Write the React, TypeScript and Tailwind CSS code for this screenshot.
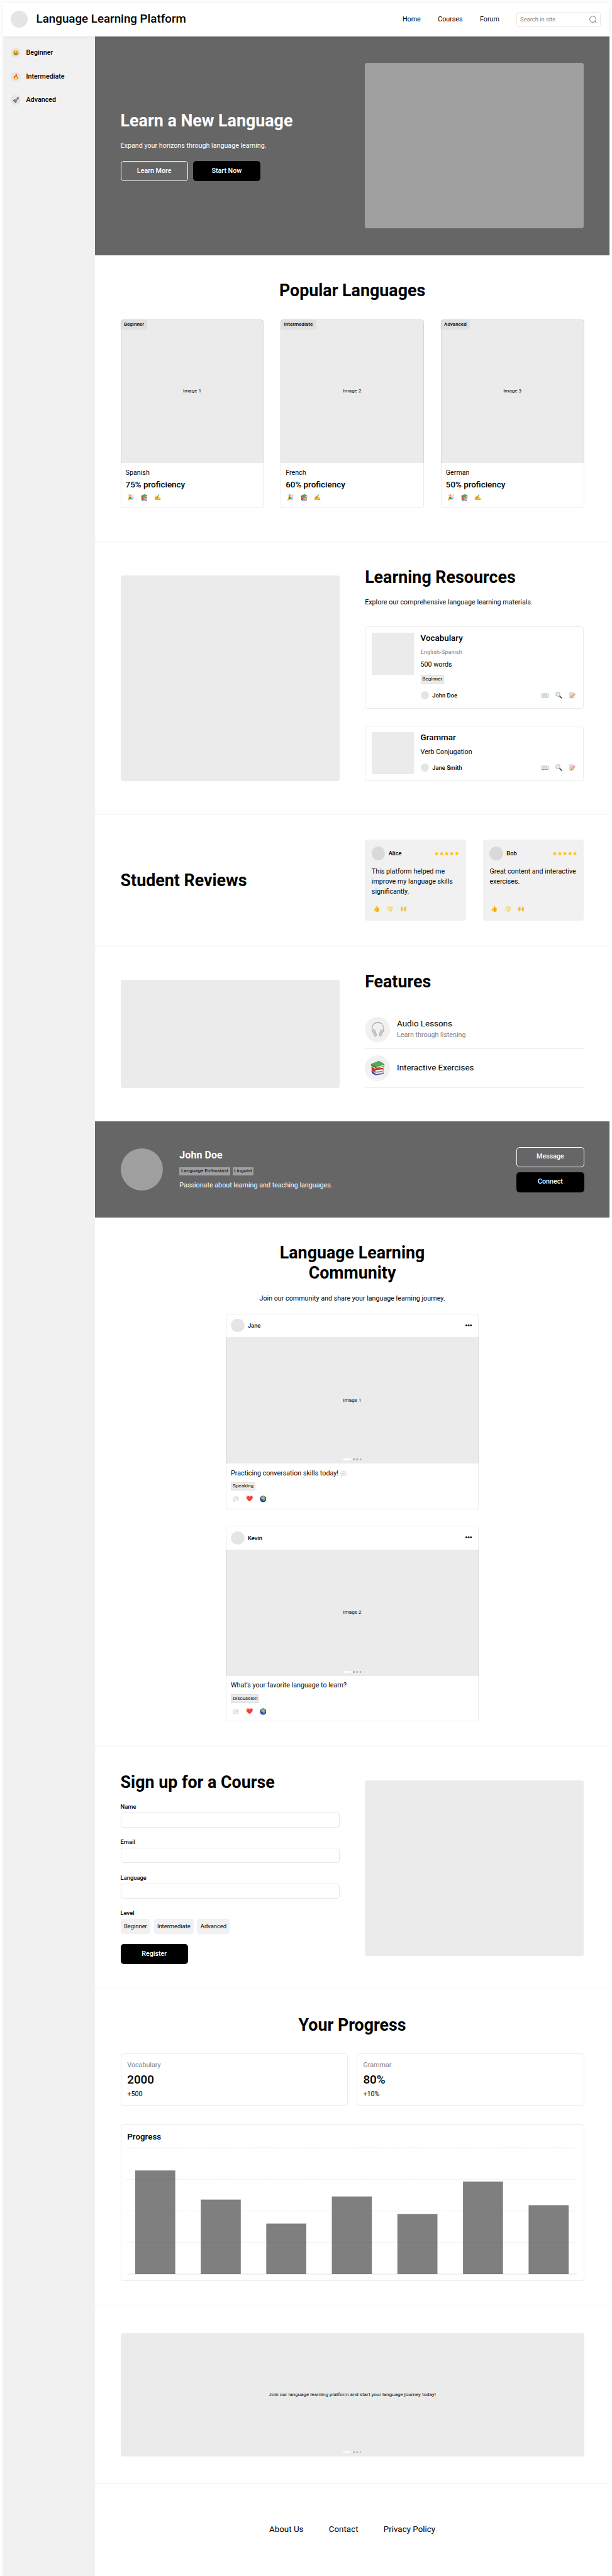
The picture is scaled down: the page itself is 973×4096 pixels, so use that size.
import type { ReactNode } from "react";

const FRAME =
  "after:pointer-events-none after:absolute after:inset-0 after:rounded-[4px] after:border after:border-black/8 after:content-['']";

function Headphones() {
  return (
    <svg viewBox="0 0 32 36" className="h-36 w-32" fill="none">
      <path d="M2.5 24V15C2.5 6 8 1.5 16 1.5S29.500 6 29.500 15V24" stroke="#b5b5b5" strokeWidth="1.8" />
      <path d="M9 3.200Q16 -.2 23 3.200" stroke="#a3a3a3" strokeWidth="2.400" />
      <path d="M1.500 19 4.500 17 12 32 9 35Z" fill="#d2d2d2" stroke="#9a9a9a" strokeWidth=".8" />
      <path d="M30.500 19 27.500 17 20 32 23 35Z" fill="#d2d2d2" stroke="#9a9a9a" strokeWidth=".8" />
      <path d="M6.500 18.500 9.500 18 14 31 12 34Z" fill="#bcbcbc" />
      <path d="M25.500 18.500 22.500 18 18 31 20 34Z" fill="#bcbcbc" />
    </svg>
  );
}

function Books({ className = "size-16" }: { className?: string }) {
  return (
    <svg viewBox="0 0 32 32" className={className}>
      <path d="M2 20 10 27 29 24V29L11 32 3 27Z" fill="#3e4f9b" />
      <path d="M11 27 28 24V27L11 30Z" fill="#e9e9ee" />
      <path d="M2 12 9 17 29 15V23L11 26 3 21Z" fill="#cf2b2b" />
      <path d="M11 20.500 28 18.500V22L11 24.200Z" fill="#f3efec" />
      <path d="M1 7 19 0 31 7V12L14 17 2 11Z" fill="#2f7d34" />
      <path d="M1 7 19 0 31 7 13 13Z" fill="#57a84f" />
      <path d="M13.500 13.500 30 8.500V11L14 15.500Z" fill="#eeeee6" />
    </svg>
  );
}

function Bubble() {
  return (
    <svg viewBox="0 0 32 32" className="inline-block size-16">
      <path
        d="M16 5C24.500 5 31 9 31 15S24.500 25 16 25Q13.500 25 11.500 24.500 8 28 3.500 27.500 6.500 25.500 6.500 22.500C3 20.700 1 18.200 1 15 1 9 7.500 5 16 5Z"
        fill="#f5f5f5"
        stroke="#bdbdbd"
        strokeWidth="1.800"
      />
      <g fill="#8c8c8c">
        <circle cx="10.500" cy="15" r="1.700" />
        <circle cx="16" cy="15" r="1.700" />
        <circle cx="21.500" cy="15" r="1.700" />
      </g>
    </svg>
  );
}

function Globe() {
  return (
    <svg viewBox="0 0 32 32" className="size-16">
      <circle cx="16" cy="16" r="15.500" fill="#2457b8" />
      <path d="M3 23A15 15 0 0 0 29 23Q16 30 3 23Z" fill="#173c8c" />
      <path
        d="M8 6Q15 1 22 4L27 9 24 11 28 15 24 17 22 25 18 27 16 19 9 18 6 13Z"
        fill="#8fae5b"
      />
      <path d="M9 11 19 11 21 16 15 16Z" fill="#dccb86" />
    </svg>
  );
}

function OpenBook() {
  return (
    <svg viewBox="0 0 32 32" className="size-16">
      <path d="M0 8H32V27H0Z" fill="#4d9cc4" />
      <path d="M2 5Q10 3 16 7 22 3 30 5V25Q22 23 16 26 10 23 2 25Z" fill="#eceef0" />
      <path d="M16 7V26" stroke="#7d858c" strokeWidth="1.800" />
      <path
        d="M5 9H13M5 13H13M5 17H13M5 21H13M19 9H27M19 13H27M19 17H27M19 21H27"
        stroke="#a8adb2"
        strokeWidth="1.400"
      />
    </svg>
  );
}

function Magnifier() {
  return (
    <svg viewBox="0 0 32 32" className="size-16" fill="none">
      <path d="M20 20 30 30" stroke="#2b2b2b" strokeWidth="4.600" strokeLinecap="round" />
      <circle cx="12" cy="12" r="10" fill="#e9eff3" stroke="#8d9298" strokeWidth="2.200" />
      <path d="M6 11Q7.500 6.500 12 6" stroke="#fff" strokeWidth="2" />
    </svg>
  );
}

function Memo() {
  return (
    <svg viewBox="0 0 32 32" className="size-16">
      <path d="M2 1H28V31H2Z" fill="#e3e3e3" />
      <path d="M6 6H24M6 11H24M6 16H18M6 21H13" stroke="#b4b4b4" strokeWidth="1.500" />
      <path d="M12 22 25 10 30 15 17 27Z" fill="#f2b632" />
      <path d="M25 10 27 8Q31 8 32 13L30 15Z" fill="#e57373" />
      <path d="M12 22 17 27 9 30Z" fill="#8a6a45" />
    </svg>
  );
}

function GlowStar() {
  return (
    <svg viewBox="0 0 32 32" className="size-16">
      <path
        d="M16 5 19.200 12 27 12.700 21 18 23 26 16 21.800 9 26 11 18 5 12.700 12.800 12Z"
        fill="#fff0a0"
        stroke="#f5b921"
        strokeWidth="2"
        strokeLinejoin="round"
      />
      <path
        d="M8 3 10.500 7M24 3 21.500 7M1 19 5 18M31 19 27 18M16 26V31M2 8 5 10M30 8 27 10"
        stroke="#f0b429"
        strokeWidth="2"
      />
    </svg>
  );
}

type Item = { id: string; icon: ReactNode };

function Emojis({ items }: { items: Item[] }) {
  return (
    <div className="flex gap-8">
      {items.map((e) => (
        <span key={e.id} className="flex size-24 shrink-0 items-center justify-center text-[9px] leading-none">
          {e.icon}
        </span>
      ))}
    </div>
  );
}

const PRAISE: Item[] = [
  { id: "party", icon: "🎉" },
  { id: "books", icon: <Books /> },
  { id: "writing", icon: "✍️" },
];

const STUDY: Item[] = [
  { id: "book", icon: <OpenBook /> },
  { id: "search", icon: <Magnifier /> },
  { id: "memo", icon: <Memo /> },
];

const CHEERS: Item[] = [
  { id: "thumb", icon: "👍" },
  { id: "star", icon: <GlowStar /> },
  { id: "hands", icon: "🙌" },
];

const REACTIONS: Item[] = [
  { id: "bubble", icon: <Bubble /> },
  { id: "heart", icon: "❤️" },
  { id: "globe", icon: <Globe /> },
];

function Heading({ children, className = "" }: { children: ReactNode; className?: string }) {
  return <h2 className={`text-[26.8px] leading-48 font-bold ${className}`}>{children}</h2>;
}

function Tag({ children }: { children: ReactNode }) {
  return (
    <span className="flex h-20 w-fit items-center rounded-[1px] border border-black/5 bg-[#ebebeb] px-3 text-[8.04px] leading-none">
      {children}
    </span>
  );
}

function Button({ children, solid = false }: { children: ReactNode; solid?: boolean }) {
  return (
    <button
      className={`h-48 w-160 rounded-[5px] text-[10.72px] leading-none font-medium text-white ${
        solid ? "bg-black" : "border border-white"
      }`}
    >
      {children}
    </button>
  );
}

function Pager() {
  return (
    <div className="absolute bottom-8 left-1/2 flex -translate-x-1/2 gap-4">
      <span className="h-4 w-20 rounded-[1px] bg-white" />
      <span className="size-4 rounded-full bg-[#a6a6a6]" />
      <span className="size-4 rounded-full bg-[#a6a6a6]" />
      <span className="size-4 rounded-full bg-[#a6a6a6]" />
    </div>
  );
}

function Header() {
  return (
    <header className="relative z-10 flex h-80 items-center bg-white px-20 shadow-[0_0_5px_rgba(0,0,0,0.1)]">
      <span className="size-40 rounded-full bg-[#e5e5e5]" />
      <h1 className="ml-20 text-[18.76px] leading-40 font-medium">Language Learning Platform</h1>
      <nav className="ml-auto flex gap-41 text-[10.72px] leading-24">
        <a>Home</a>
        <a>Courses</a>
        <a>Forum</a>
      </nav>
      <div className="ml-41 flex h-36 w-200 items-center justify-between rounded-[4px] border border-[#e8e8e8] pr-8 pl-7 text-[9.38px] leading-none text-[#808080]">
        <span>Search in site</span>
        <svg viewBox="0 0 18 18" className="size-18" fill="none" stroke="#555" strokeWidth="1.3">
          <circle cx="8.3" cy="8.3" r="7.4" />
          <path d="M13.4 13.6 17 17.4" />
        </svg>
      </div>
    </header>
  );
}

const LEVELS = [
  ["😀", "Beginner"],
  ["🔥", "Intermediate"],
  ["🚀", "Advanced"],
];

function Sidebar() {
  return (
    <aside className="flex w-220 shrink-0 flex-col gap-32 bg-[#f1f1f1] px-20 pt-28">
      {LEVELS.map(([icon, label]) => (
        <a key={label} className="flex h-24 items-center gap-12 text-[10.72px] leading-24 font-medium">
          <span className="flex size-24 items-center justify-center rounded-full bg-[#e5e5e5] text-[8.5px] leading-none">
            {icon}
          </span>
          {label}
        </a>
      ))}
    </aside>
  );
}

function Hero() {
  return (
    <section className="flex h-520 items-center gap-60 bg-[#666] px-60 text-white">
      <div className="w-520">
        <Heading>Learn a New Language</Heading>
        <p className="mt-24 text-[10.72px] leading-24">Expand your horizons through language learning.</p>
        <div className="mt-24 flex gap-12">
          <Button>Learn More</Button>
          <Button solid>Start Now</Button>
        </div>
      </div>
      <div className="h-392 w-520 rounded-[4px] bg-[#9f9f9f]" />
    </section>
  );
}

const LANGUAGES = [
  { level: "Beginner", image: "Image 1", name: "Spanish", score: "75% proficiency" },
  { level: "Intermediate", image: "Image 2", name: "French", score: "60% proficiency" },
  { level: "Advanced", image: "Image 3", name: "German", score: "50% proficiency" },
];

function Popular() {
  return (
    <section className="h-680 border-b border-[#f2f2f2] px-60 pt-60">
      <Heading className="text-center">Popular Languages</Heading>
      <div className="mt-44 flex gap-40">
        {LANGUAGES.map((l) => (
          <article key={l.name} className={`relative h-448 w-340 overflow-hidden rounded-[4px] ${FRAME}`}>
            <div className="relative flex h-340 items-center justify-center bg-[#ebebeb] text-[8.04px] leading-none">
              {l.image}
              <span className="absolute top-0 left-0 flex h-24 items-center rounded-br-[4px] bg-[#dfdfdf] px-8 font-medium">
                {l.level}
              </span>
            </div>
            <div className="px-12 pt-12">
              <p className="text-[10.72px] leading-24">{l.name}</p>
              <p className="my-4 text-[13.4px] leading-28 font-medium">{l.score}</p>
              <Emojis items={PRAISE} />
            </div>
          </article>
        ))}
      </div>
    </section>
  );
}

function Resource({ title, author, children }: { title: string; author: string; children: ReactNode }) {
  return (
    <>
      <div className="size-100 shrink-0 bg-[#ebebeb]" />
      <div className="flex-1">
        <h3 className="text-[13.4px] leading-28 font-medium">{title}</h3>
        {children}
        <div className="flex h-24 items-center justify-between">
          <div className="flex items-center gap-8 text-[9.38px] leading-none font-medium">
            <span className="size-20 rounded-full bg-[#e5e5e5]" />
            {author}
          </div>
          <Emojis items={STUDY} />
        </div>
      </div>
    </>
  );
}

function Resources() {
  return (
    <section className="flex h-648 gap-60 border-b border-[#f2f2f2] px-60 pt-60">
      <div className="mt-20 h-488 w-520 rounded-[4px] bg-[#ebebeb]" />
      <div className="w-520">
        <Heading>Learning Resources</Heading>
        <p className="mt-24 text-[10.72px] leading-24">Explore our comprehensive language learning materials.</p>
        <article className={`relative mt-44 flex h-196 gap-16 p-16 ${FRAME}`}>
          <Resource title="Vocabulary" author="John Doe">
            <p className="mt-8 text-[9.38px] leading-20 text-[#808080]">English-Spanish</p>
            <p className="mt-8 text-[10.72px] leading-24">500 words</p>
            <div className="mt-12 mb-16">
              <Tag>Beginner</Tag>
            </div>
          </Resource>
        </article>
        <article className={`relative mt-40 flex h-132 gap-16 p-16 ${FRAME}`}>
          <Resource title="Grammar" author="Jane Smith">
            <p className="mt-8 mb-12 text-[10.72px] leading-24">Verb Conjugation</p>
          </Resource>
        </article>
      </div>
    </section>
  );
}

const REVIEWS = [
  { name: "Alice", text: "This platform helped me improve my language skills significantly." },
  { name: "Bob", text: "Great content and interactive exercises." },
];

function Reviews() {
  return (
    <section className="flex h-312 items-center gap-60 border-b border-[#f2f2f2] px-60">
      <Heading className="w-520">Student Reviews</Heading>
      <div className="flex gap-40">
        {REVIEWS.map((r) => (
          <article key={r.name} className="flex h-192 w-240 flex-col rounded-[4px] bg-[#f1f1f1] p-16">
            <div className="flex h-32 items-center gap-8 text-[9.38px] leading-none font-medium">
              <span className="size-32 rounded-full bg-[#d9d9d9]" />
              {r.name}
              <svg viewBox="0 0 60 12" className="ml-auto h-12 w-60" fill="#ffc60a">
                {[0, 12, 24, 36, 48].map((x) => (
                  <path
                    key={x}
                    transform={`translate(${x} 0)`}
                    d="M6 .6 7.5 4.2 11.4 4.5 8.4 7 9.4 10.9 6 8.8 2.6 10.9 3.6 7 .6 4.5 4.5 4.2Z"
                  />
                ))}
              </svg>
            </div>
            <p className="mt-16 h-72 text-[10.72px] leading-24">{r.text}</p>
            <div className="mt-16">
              <Emojis items={CHEERS} />
            </div>
          </article>
        ))}
      </div>
    </section>
  );
}

const FEATURES = [
  { icon: <Headphones />, title: "Audio Lessons", note: "Learn through listening" },
  { icon: <Books className="size-34" />, title: "Interactive Exercises", note: "" },
];

function Features() {
  return (
    <section className="flex h-416 gap-60 px-60 pt-60">
      <div className="mt-20 h-256 w-520 rounded-[4px] bg-[#ebebeb]" />
      <div className="w-520">
        <Heading className="mb-44">Features</Heading>
        {FEATURES.map((f) => (
          <div key={f.title} className="flex h-92 items-center gap-16 border-b border-[#ececec]">
            <span className="flex size-60 items-center justify-center rounded-full bg-[#f1f1f1]">{f.icon}</span>
            <div>
              <p className="text-[13.4px] leading-28">{f.title}</p>
              {f.note && <p className="text-[10.72px] leading-24 text-[#808080]">{f.note}</p>}
            </div>
          </div>
        ))}
      </div>
    </section>
  );
}

function Profile() {
  return (
    <section className="flex h-228 items-center gap-40 bg-[#666] px-60 text-white">
      <span className="size-100 rounded-full bg-[#9f9f9f]" />
      <div className="flex-1">
        <h2 className="text-[16.08px] leading-32 font-bold">John Doe</h2>
        <div className="my-12 flex gap-6 text-[8.04px] leading-none text-black">
          <span className="flex h-20 items-center rounded-[1px] bg-[#9f9f9f] px-4">Language Enthusiast</span>
          <span className="flex h-20 items-center rounded-[1px] bg-[#9f9f9f] px-4">Linguist</span>
        </div>
        <p className="text-[10.72px] leading-24">Passionate about learning and teaching languages.</p>
      </div>
      <div className="flex flex-col gap-12">
        <Button>Message</Button>
        <Button solid>Connect</Button>
      </div>
    </section>
  );
}

const POSTS = [
  {
    name: "Jane",
    image: "Image 1",
    text: (
      <>
        Practicing conversation skills today! <Bubble />
      </>
    ),
    tag: "Speaking",
  },
  { name: "Kevin", image: "Image 2", text: "What's your favorite language to learn?", tag: "Discussion" },
];

function Community() {
  return (
    <section className="flex h-1256 flex-col items-center border-b border-[#f2f2f2] pt-60">
      <Heading className="w-520 text-center">
        Language Learning
        <br />
        Community
      </Heading>
      <p className="my-24 text-[10.72px] leading-24">Join our community and share your language learning journey.</p>
      <div className="flex flex-col gap-40">
        {POSTS.map((p) => (
          <article key={p.name} className={`relative h-464 w-600 overflow-hidden rounded-[4px] ${FRAME}`}>
            <div className="flex h-56 items-center gap-8 px-12 text-[9.38px] leading-none font-medium">
              <span className="size-32 rounded-full bg-[#e5e5e5]" />
              {p.name}
              <svg viewBox="0 0 24 24" className="ml-auto size-24" fill="#000">
                <circle cx="6.6" cy="11" r="2" />
                <circle cx="12" cy="11" r="2" />
                <circle cx="17.4" cy="11" r="2" />
              </svg>
            </div>
            <div className="relative flex h-300 items-center justify-center bg-[#ebebeb] text-[8.04px] leading-none">
              {p.image}
              <Pager />
            </div>
            <div className="px-12 pt-11">
              <p className="h-24 text-[10.72px] leading-24">{p.text}</p>
              <div className="mt-9 mb-8">
                <Tag>{p.tag}</Tag>
              </div>
              <Emojis items={REACTIONS} />
            </div>
          </article>
        ))}
      </div>
    </section>
  );
}

function SignUp() {
  return (
    <section className="flex h-576 gap-60 border-b border-[#f2f2f2] px-60 pt-60">
      <div className="w-520">
        <Heading>Sign up for a Course</Heading>
        {["Name", "Email", "Language"].map((f) => (
          <label key={f} className="mt-24 block text-[9.38px] leading-20 font-medium">
            {f}
            <span className="mt-4 block h-36 w-520 rounded-[4px] border border-[#e8e8e8]" />
          </label>
        ))}
        <p className="mt-24 text-[9.38px] leading-20 font-medium">Level</p>
        <div className="mt-4 mb-24 flex gap-8">
          {["Beginner", "Intermediate", "Advanced"].map((c) => (
            <span key={c} className="flex h-36 items-center rounded-[4px] bg-[#f1f1f1] px-8 text-[9.38px] leading-none">
              {c}
            </span>
          ))}
        </div>
        <Button solid>Register</Button>
      </div>
      <div className="mt-20 h-416 w-520 rounded-[4px] bg-[#ebebeb]" />
    </section>
  );
}

const STATS = [
  ["Vocabulary", "2000", "+500"],
  ["Grammar", "80%", "+10%"],
];

const BARS = [
  [19.4, 246],
  [174.9, 176.8],
  [330.4, 120],
  [486, 184.2],
  [641.6, 142.8],
  [797.2, 219.8],
  [952.9, 163.6],
];

function Progress() {
  return (
    <section className="h-752 border-b border-[#f2f2f2] px-60 pt-60">
      <Heading className="text-center">Your Progress</Heading>
      <div className="mt-44 flex gap-20">
        {STATS.map(([label, value, delta]) => (
          <div key={label} className={`relative h-124 w-540 p-16 ${FRAME}`}>
            <p className="text-[10.72px] leading-24 text-[#808080]">{label}</p>
            <p className="my-4 text-[18.76px] leading-36 font-medium">{value}</p>
            <p className="text-[10.72px] leading-24">{delta}</p>
          </div>
        ))}
      </div>
      <div className={`relative mt-44 h-372 p-16 ${FRAME}`}>
        <h3 className="mb-12 text-[13.4px] leading-28 font-medium">Progress</h3>
        <svg viewBox="0 0 1068 300" className="h-300 w-1068 overflow-visible">
          <g stroke="#ededed" strokeWidth="2" strokeDasharray="3 3">
            <path d="M0 0H1068M0 75H1068M0 150H1068M0 225H1068" />
          </g>
          <path d="M0 300H1068" stroke="#ededed" strokeWidth="2" />
          {BARS.map(([x, h]) => (
            <rect key={x} x={x} y={300 - h} width="95" height={h} fill="#000" fillOpacity="0.5" />
          ))}
        </svg>
      </div>
    </section>
  );
}

function Banner() {
  return (
    <section className="h-420 border-b border-[#f2f2f2] px-60 pt-64">
      <div className="relative flex h-292 items-center justify-center rounded-[4px] bg-[#ebebeb] text-[8.04px] leading-none">
        Join our language learning platform and start your language journey today!
        <Pager />
      </div>
    </section>
  );
}

export default function App() {
  return (
    <div className="w-1452 overflow-hidden bg-white px-6 pt-6 font-['Roboto','Noto_Color_Emoji',sans-serif] text-black [--spacing:0.66995px]">
      <Header />
      <div className="flex">
        <Sidebar />
        <main className="w-1220">
          <Hero />
          <Popular />
          <Resources />
          <Reviews />
          <Features />
          <Profile />
          <Community />
          <SignUp />
          <Progress />
          <Banner />
          <footer className="flex h-220 items-center justify-center gap-60 text-[13.4px] leading-28">
            <a>About Us</a>
            <a>Contact</a>
            <a>Privacy Policy</a>
          </footer>
        </main>
      </div>
    </div>
  );
}
